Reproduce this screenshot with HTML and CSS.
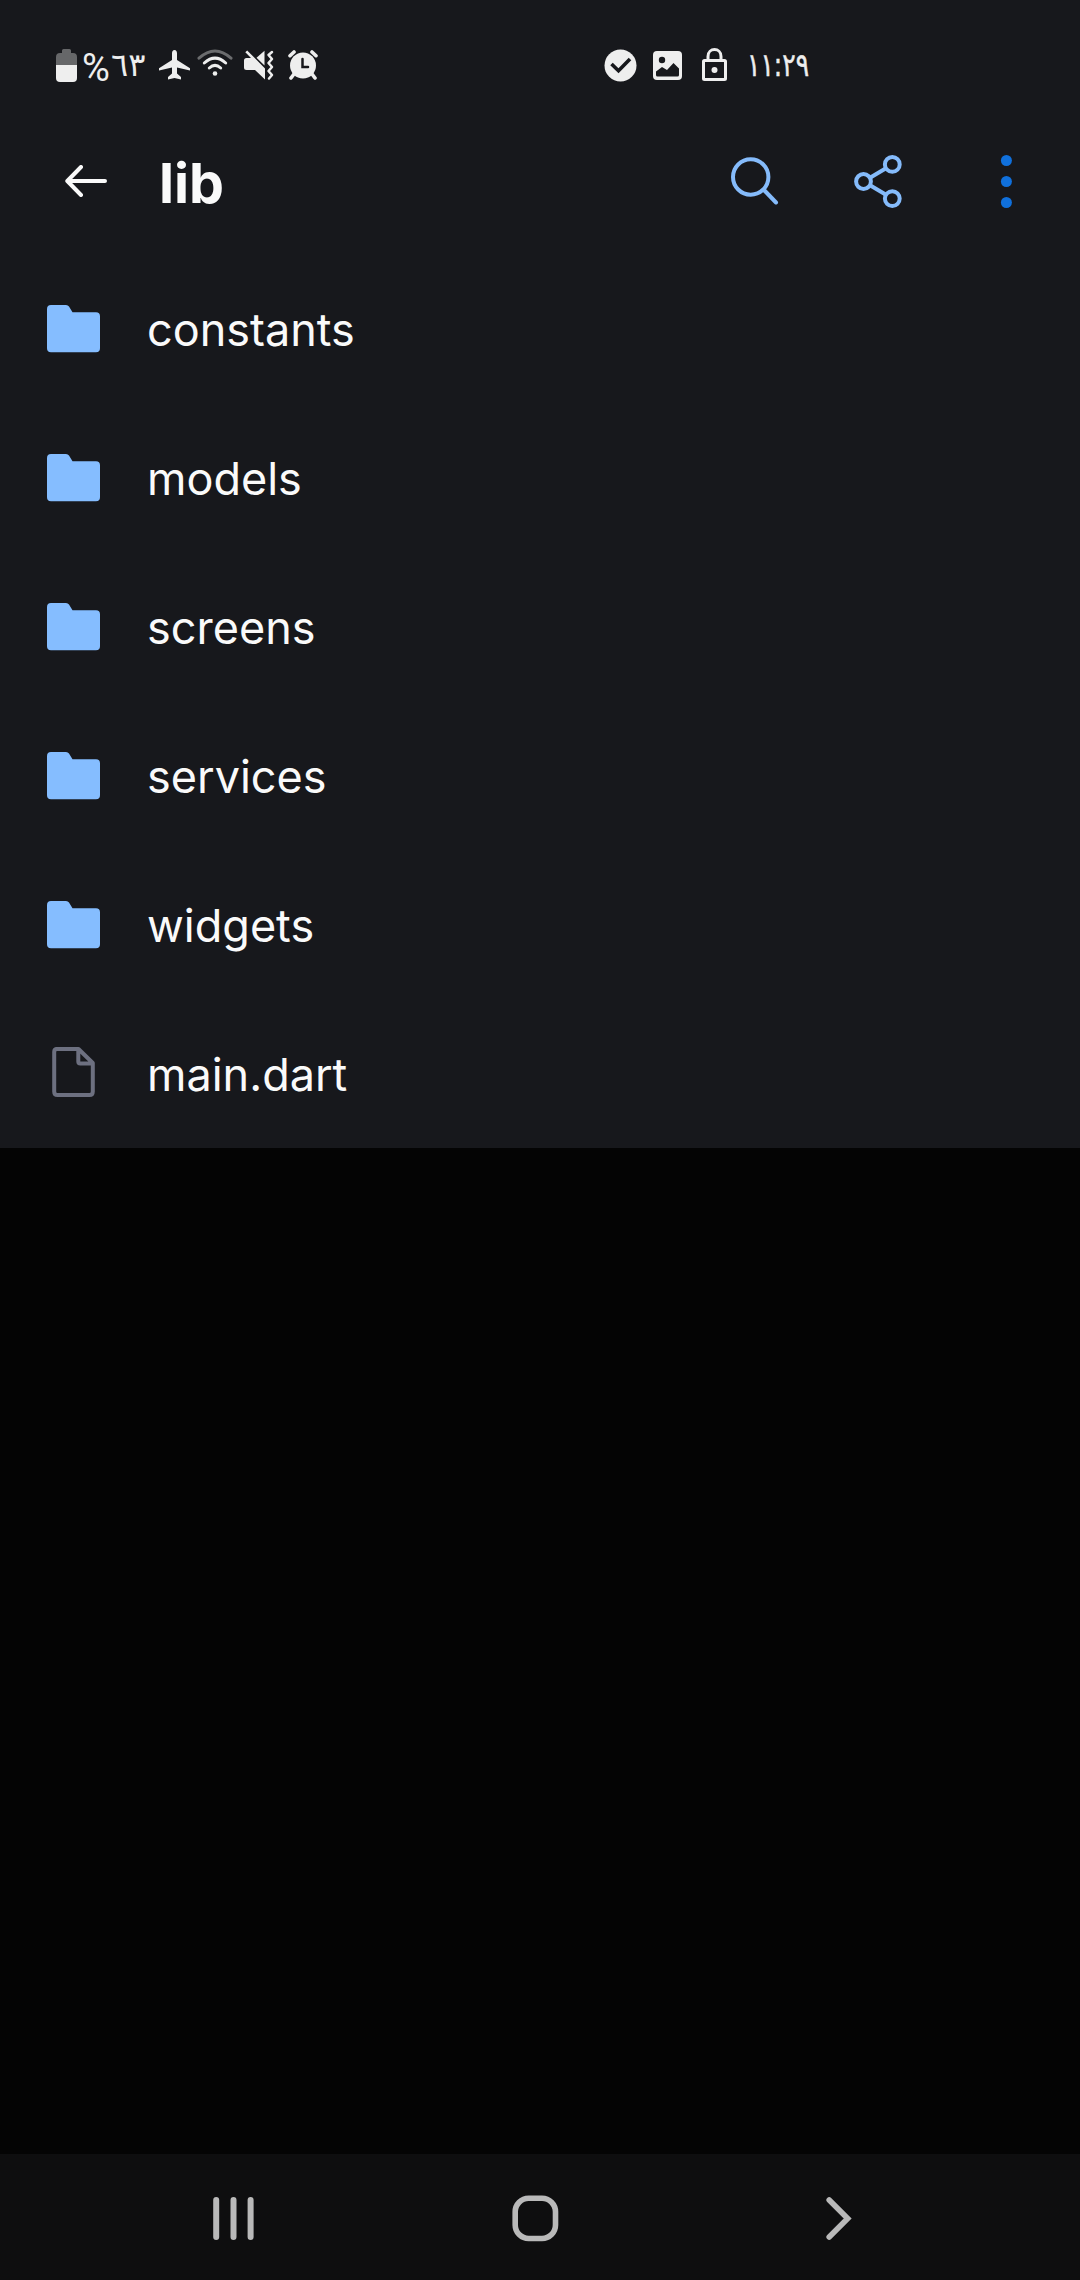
FILE: index.html
```html
<!DOCTYPE html>
<html lang="en">
<head>
<meta charset="utf-8">
<meta name="viewport" content="width=1080">
<title>lib</title>
<link rel="stylesheet" href="styles.css">
</head>
<body>
<div class="screen">
  <header class="status-bar">
    <div class="status-group">
      <svg class="battery" width="21" height="33" viewBox="0 0 21 33"><path fill="#666769" d="M6 1.5Q6 0 7.500 0H13.500Q15 0 15 1.500V4H17Q21 4 21 8V17H0V8Q0 4 4 4H6Z"/><path fill="#eee" d="M0 16H21V29Q21 33 17 33H4Q0 33 0 29Z"/></svg>
      <span class="percent"><span class="percent-sign">%</span><span class="percent-value">٦٣</span></span>
      <svg class="airplane" width="31" height="30" viewBox="0 0 31 30"><path fill="#eee" d="M15.500 0C17.200 0 18 1.500 18 3.200V10L31 18.200V20.500L18 17.500V23.500L22 27V29.500L15.500 28L9 29.500V27L13 23.500V17.500L0 20.500V18.200L13 10V3.200C13 1.500 13.800 0 15.500 0Z"/></svg>
      <svg class="wifi" width="36" height="28" viewBox="0 0 36 28" fill="none" stroke-linecap="round" stroke-width="3"><path stroke="#6b6c6e" d="M2 9.200Q18 -5.200 34 9.200"/><path stroke="#eee" d="M7.300 14Q18 4.200 28.700 14M12.300 19Q18 13.800 23.700 19"/><circle cx="18" cy="24.500" r="2.300" fill="#eee"/></svg>
      <svg class="mute" width="31" height="31" viewBox="0 0 31 31"><path fill="#eee" d="M2.500 8H7L1.300 2.300L3.200 .4L21 18.500V29.500L11 20H2.500Q0 20 0 17.500V10.500Q0 8 2.500 8ZM12.500 7.700L20.500 .7V15.500Z"/><path fill="none" stroke="#eee" stroke-width="2.500" stroke-linecap="round" stroke-linejoin="round" d="M28 2L24.500 5L28 9L24.500 13L28 17L24.500 21L28 25L25 28.500"/></svg>
      <svg class="alarm" width="30" height="30" viewBox="0 0 30 30" stroke="#eee" stroke-linecap="round"><path fill="none" stroke-width="3.600" d="M2 5.700L6 2M24 2L28 5.700M6 24L3 28M24 24L27 28"/><circle cx="15" cy="15.500" r="13" fill="#eee" stroke="none"/><path fill="none" stroke="#17181c" stroke-width="2.500" d="M14.500 9V17H20"/></svg>
    </div>
    <div class="status-group clock-group">
      <svg width="33" height="33" viewBox="0 0 33 33"><circle cx="16.500" cy="16.500" r="16" fill="#eee"/><path fill="none" stroke="#17181c" stroke-width="3.600" d="M7.500 15L14.500 21.700L26 10"/></svg>
      <svg class="picture" width="29" height="29" viewBox="0 0 29 29"><rect width="29" height="29" rx="4" fill="#eee"/><circle cx="9" cy="9" r="3.200" fill="#17181c"/><path fill="#17181c" d="M3 20.500L9 16L14 19L20.500 12L26 17.500V24Q26 25.500 24.500 25.500H4.500Q3 25.500 3 24Z"/></svg>
      <svg class="lock" width="25" height="33" viewBox="0 0 25 33" fill="none" stroke="#eee" stroke-width="3"><rect x="1.500" y="12.500" width="22" height="19" rx="1"/><path d="M6 12V8.500C6 -.7 19 -.7 19 8.500V12"/><circle cx="12.500" cy="22" r="3" fill="#eee" stroke="none"/></svg>
      <span class="time"><span class="time-text">١١:٢٩</span></span>
    </div>
  </header>

  <nav class="app-bar">
    <svg class="back" width="42" height="32" viewBox="0 0 42 32" fill="none" stroke="#fafafa" stroke-width="4" stroke-linecap="round" stroke-linejoin="round"><path d="M16 2L2.300 16L16 30M3 16H40"/></svg>
    <h1 class="title">lib</h1>
    <div class="actions">
      <svg width="48" height="54" viewBox="0 0 48 54" fill="none" stroke="#85bbfb" stroke-width="4" stroke-linecap="round"><circle cx="19.700" cy="22" r="17.700"/><path d="M33 35L45 47.500"/></svg>
      <svg class="share" width="48" height="54" viewBox="0 0 48 54" fill="none" stroke="#85bbfb" stroke-width="4"><circle cx="9.500" cy="26.500" r="7.400"/><circle cx="38.300" cy="9.400" r="7.400"/><circle cx="38.300" cy="43.600" r="7.400"/><path d="M16 22.700L32 13.200M16 30.300L32 39.800"/></svg>
      <svg class="more" width="12" height="54" viewBox="0 0 12 54" fill="#1070dc"><circle cx="6.400" cy="5.500" r="5.500"/><circle cx="6.400" cy="26.500" r="5.500"/><circle cx="6.400" cy="47.500" r="5.500"/></svg>
    </div>
  </nav>

  <ul class="files">
    <li class="row"><svg class="icon" width="53" height="54" viewBox="0 0 53 54"><path class="folder" d="M4 3H19Q21 3 22 4.500L25.500 10.300H49Q53 10.300 53 14.300V46.300Q53 50.300 49 50.300H4Q0 50.300 0 46.300V7Q0 3 4 3Z"/></svg><span>constants</span></li>
    <li class="row"><svg class="icon" width="53" height="54" viewBox="0 0 53 54"><path class="folder" d="M4 3H19Q21 3 22 4.500L25.500 10.300H49Q53 10.300 53 14.300V46.300Q53 50.300 49 50.300H4Q0 50.300 0 46.300V7Q0 3 4 3Z"/></svg><span>models</span></li>
    <li class="row"><svg class="icon" width="53" height="54" viewBox="0 0 53 54"><path class="folder" d="M4 3H19Q21 3 22 4.500L25.500 10.300H49Q53 10.300 53 14.300V46.300Q53 50.300 49 50.300H4Q0 50.300 0 46.300V7Q0 3 4 3Z"/></svg><span>screens</span></li>
    <li class="row"><svg class="icon" width="53" height="54" viewBox="0 0 53 54"><path class="folder" d="M4 3H19Q21 3 22 4.500L25.500 10.300H49Q53 10.300 53 14.300V46.300Q53 50.300 49 50.300H4Q0 50.300 0 46.300V7Q0 3 4 3Z"/></svg><span>services</span></li>
    <li class="row"><svg class="icon" width="53" height="54" viewBox="0 0 53 54"><path class="folder" d="M4 3H19Q21 3 22 4.500L25.500 10.300H49Q53 10.300 53 14.300V46.300Q53 50.300 49 50.300H4Q0 50.300 0 46.300V7Q0 3 4 3Z"/></svg><span>widgets</span></li>
    <li class="row"><svg class="icon" width="53" height="54" viewBox="0 0 53 54"><path class="document" d="M8.500 2H31.500L45.800 16V44.500Q45.800 48 42.500 48H10.500Q7.200 48 7.200 44.500V5Q7.200 2 10 2M31.300 2.500V14.500Q31.300 16.500 33.300 16.500H45"/></svg><span>main.dart</span></li>
  </ul>

  <footer class="nav-bar">
    <svg width="41" height="43" viewBox="0 0 41 43" stroke="#b9b9b9" stroke-width="6" stroke-linecap="round"><path d="M3.200 3V40M20.500 3V40M37.600 3V40"/></svg>
    <svg class="home" width="47" height="47" viewBox="0 0 47 47" fill="none" stroke="#b9b9b9" stroke-width="5.600"><rect x="3.200" y="3.200" width="40.300" height="40.300" rx="13.500"/></svg>
    <svg class="chevron" width="27" height="43" viewBox="0 0 27 43" fill="none" stroke="#b9b9b9" stroke-width="5.600" stroke-linecap="round"><path d="M3.200 3L21.700 21.500L3.200 40"/></svg>
  </footer>
</div>
</body>
</html>
```
FILE: styles.css
```css
* { box-sizing: border-box; }

body {
  margin: 0;
  background: #040404;
  color: #fafafa;
  font-family: Inter, Roboto, sans-serif;
}

svg { display: block; flex: none; }

.screen {
  display: flex;
  flex-direction: column;
  width: 1080px;
  height: 2280px;
  background: #040404;
}

.status-bar {
  display: flex;
  height: 108px;
  padding: 0 270px 0 56px;
  justify-content: space-between;
  background: #17181c;
}

.status-group {
  display: flex;
  align-items: center;
  height: 130px;
  color: #eee;
  font-family: "DejaVu Sans", sans-serif;
}

.percent {
  display: flex;
  align-items: center;
  width: 64px;
  margin-left: 5px;
  margin-right: 1px;
  white-space: nowrap;
}

.percent-sign {
  width: 29px;
  padding-top: 5px;
  font: 38px/40px Roboto, sans-serif;
}

.percent-value {
  padding-bottom: 1px;
  font-size: 32px;
  line-height: 40px;
}

.airplane { margin-left: 12px; }
.wifi { margin: -5px 0 0 7px; }
.mute { margin-left: 11px; }
.alarm { margin-left: 13px; }
.picture { margin-left: 16px; }
.lock { margin: -1px 0 0 20px; }

.time {
  width: 62px;
  margin-left: 21px;
  padding-bottom: 1px;
  font-size: 32px;
  line-height: 40px;
  white-space: nowrap;
  -webkit-text-stroke: 0.5px #eee;
}

.time-text {
  display: inline-block;
  margin-left: -1px;
  transform: scaleX(0.78);
  transform-origin: left;
}

.app-bar {
  display: flex;
  align-items: center;
  height: 146px;
  padding: 0 68px 0 65px;
  background: #17181c;
}

.title {
  margin: 3px 0 0 52px;
  font-size: 55.5px;
  font-weight: 700;
  line-height: 66px;
}

.actions {
  display: flex;
  align-items: center;
  margin-left: auto;
  padding-top: 2px;
}

.share { margin-left: 75px; }
.more { margin-left: 98px; }

.files {
  margin: 0;
  padding: 0;
  list-style: none;
  background: #17181c;
}

.row {
  display: flex;
  align-items: center;
  gap: 47px;
  height: 149px;
  padding-left: 47px;
  font-size: 45px;
  line-height: 56px;
}

.row span { padding-top: 2px; }

.folder { fill: #85bdff; }

.document {
  fill: none;
  stroke: #6d7080;
  stroke-width: 4;
  stroke-linejoin: round;
}

.nav-bar {
  display: flex;
  align-items: center;
  height: 126px;
  margin-top: auto;
  padding: 2px 0 0 213px;
  background: #0e0e0f;
}

.home { margin-left: 258px; }
.chevron { margin-left: 267px; }
```
